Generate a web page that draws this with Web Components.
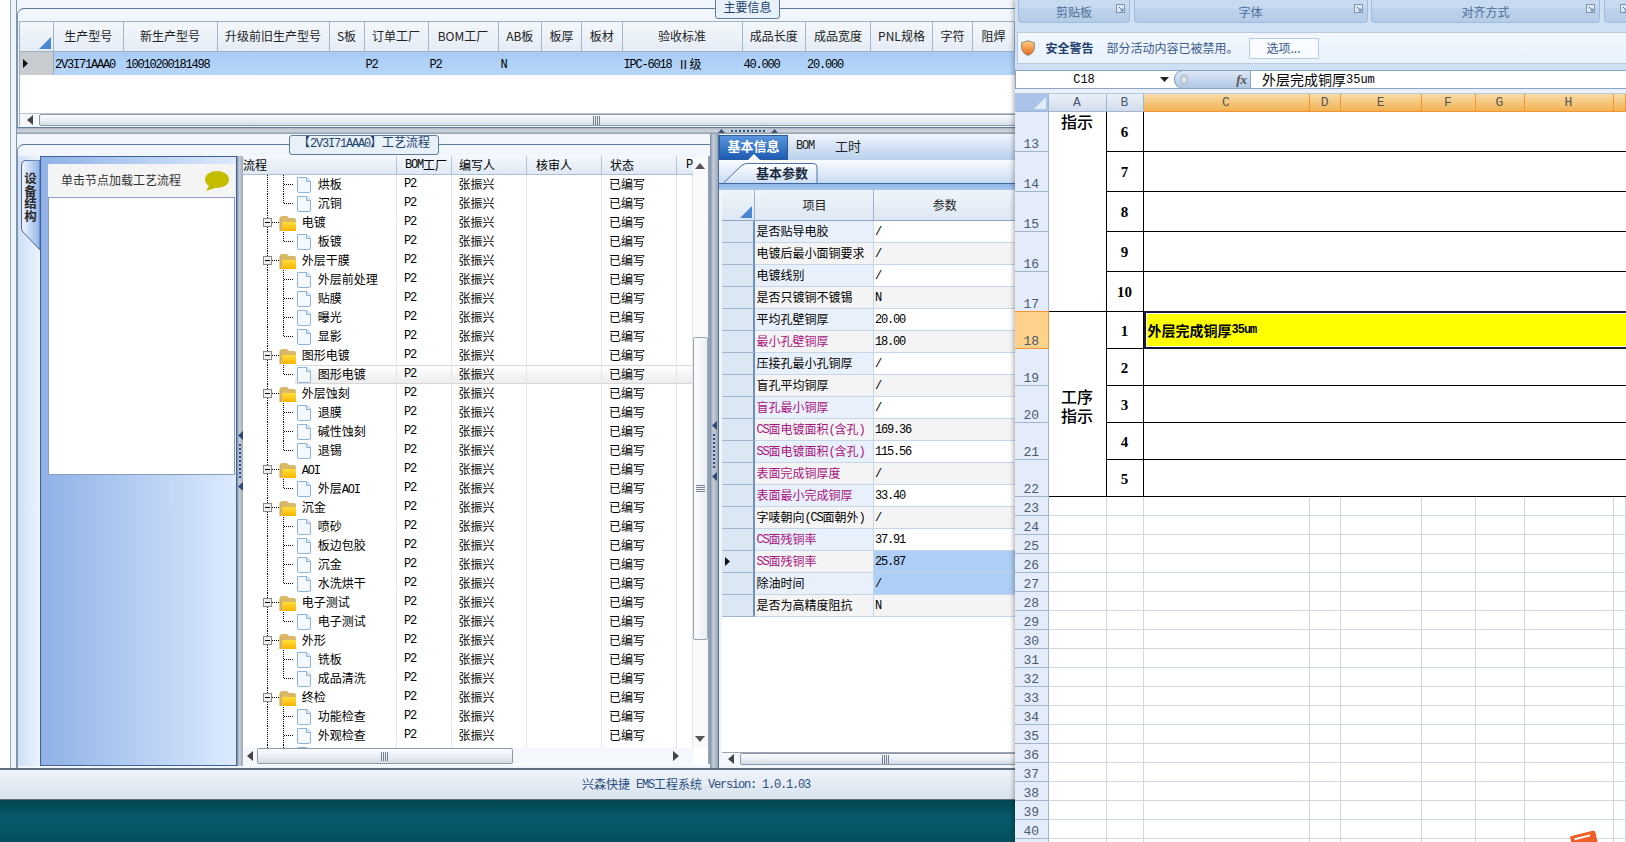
<!DOCTYPE html>
<html lang="zh-CN">
<head>
<meta charset="utf-8">
<title>EMS</title>
<style>
html,body{margin:0;padding:0;background:#04505f}
body{width:1626px;height:842px;overflow:hidden;display:flex;font:12px/1.2 "Noto Sans CJK SC",sans-serif}
</style>
</head>
<body>
<ems-app></ems-app>
<excel-window></excel-window>
<script>
const BASE=`*{box-sizing:border-box}
:host{display:block;font:12px/1.2 "Noto Sans CJK SC",sans-serif;color:#000}
.l{font:12px/1 "Liberation Mono",monospace;letter-spacing:-1.2px;white-space:pre}`;
const T=s=>s.replace(/[\x20-\x7e]+/g,m=>`<span class="l">${m}</span>`);
class Base extends HTMLElement{
  connectedCallback(){
    if(this.shadowRoot)return;
    this.attachShadow({mode:'open'}).innerHTML=`<style>${BASE}${this.constructor.css||''}</style>`+this.html();
  }
  html(){return '<slot></slot>'}
}

/* ---------- horizontal scrollbar ---------- */
class EmsHscroll extends Base{
  static css=`:host{display:flex;align-items:stretch;height:var(--h,13px);background:#f4f7fb;overflow:hidden}
  .a{display:flex;align-items:center;justify-content:center;flex:none}
  .a svg{display:block}
  .t{flex:none;display:flex;align-items:center;justify-content:center;border:1px solid #8c9aaa;border-radius:2px;background:linear-gradient(#fbfcfe,#e6ecf3 60%,#d3dbe5)}
  .g{width:7px;height:9px;background:repeating-linear-gradient(90deg,#76828f 0 1px,transparent 1px 2px)}
  .s{flex:1}`;
  html(){
    const p=this.getAttribute('pre'),t=this.getAttribute('thumb'),e=this.hasAttribute('end');
    return `<div class="a" style="width:${p}px"><svg width="6" height="10"><path d="M6 0V10L0 5Z" fill="#444"/></svg></div>
    <div class="t" style="width:${t}px"><div class="g"></div></div><div class="s"></div>
    ${e?'<div class="a" style="width:27px;padding-right:7px"><svg width="6" height="10"><path d="M0 0V10L6 5Z" fill="#444"/></svg></div>':''}`;
  }
}
customElements.define('ems-hscroll',EmsHscroll);

/* ---------- splitters ---------- */
class EmsSplit extends Base{
  static css=`:host{display:flex;flex:none;align-items:center;justify-content:center}
  :host([dir=v]){flex-direction:column;gap:4px;width:var(--w,6px);background:linear-gradient(90deg,#7d8ea3,#c6ced8 40%,#9ca8b6);}
  :host([dir=h]){height:6px;background:linear-gradient(#aeb8c4,#cfd6de 50%,#8d99a8);position:relative}
  .d{width:2px;height:34px;background:repeating-linear-gradient(#2f4f86 0 2px,transparent 2px 4px)}
  .dh{position:absolute;left:701px;top:1px;width:60px;height:4px;display:flex;align-items:center;gap:6px}
  .dh i{flex:1;height:2px;background:repeating-linear-gradient(90deg,#2f4f86 0 2px,transparent 2px 4px)}`;
  html(){
    if(this.getAttribute('dir')==='h')
      return `<div class="dh"><svg width="7" height="4"><path d="M0 4H7L3.5 0Z" fill="#3c5470"/></svg><i></i><svg width="7" height="4"><path d="M0 4H7L3.5 0Z" fill="#3c5470"/></svg></div>`;
    const a=`<svg width="5" height="9"><path d="M5 0V9L0 4.5Z" fill="#2f4a78"/></svg>`;
    return `${a}<div class="d"></div>${a}`;
  }
}
customElements.define('ems-split',EmsSplit);

/* ---------- titled panel ---------- */
class EmsPanel extends Base{
  static css=`:host{display:block;position:relative;background:#f0f6fb}
  .b{height:100%;border-top:1px solid #5f7c98;border-left:1px solid #8094aa;border-top-left-radius:7px;display:flex;flex-direction:column;min-height:0}
  .t{position:absolute;display:flex;align-items:center;justify-content:center;height:var(--th,20px);left:var(--tl);top:var(--tt);width:var(--tw);padding-bottom:var(--tp,0);background:#e8f0f8;border:1px solid #5f7c98;border-radius:3px;color:#1c4470;white-space:nowrap;z-index:2;line-height:12px}`;
  html(){return `<div class="b"><slot></slot></div><div class="t"><span>${T(this.getAttribute('caption'))}</span></div>`}
}
customElements.define('ems-panel',EmsPanel);

/* ---------- top data grid ---------- */
class EmsMainGrid extends Base{
  static css=`:host{display:flex;flex-direction:column;flex:1;min-height:0;background:#fff;overflow:hidden;border-left:1px solid #9fb0c2;--h:13px}
  .r{display:grid;grid-template-columns:34px 69.5px 94px 112px 35px 64px 70px 43.5px 40px 40.5px 120px 63.5px 65px 62px 40px 42px;flex:none;width:1020px}
  .hd{height:31px;border-top:1px solid #9fb0c2;border-bottom:1px solid #9fb0c2}
  .hd div{display:flex;align-items:center;justify-content:center;background:linear-gradient(#f3f7fb,#e4ecf6);border-right:1px solid #a5b5c8;color:#222;white-space:nowrap}
  .hd div:first-child{position:relative}
  .hd svg{position:absolute;right:2px;bottom:2px}
  .row{height:23px}
  .row div{display:flex;align-items:center;background:linear-gradient(#aacdf5,#b6d5f8);white-space:pre;padding-top:2px}
  .row div:first-child{background:#c8ccd1;border-right:1px solid #9fa8b2;padding-left:3px;padding-top:0}
  .e{flex:1;background:#fff}
  ems-hscroll{border-top:1px solid #b9c4d2}`;
  html(){
    const H=['生产型号','新生产型号','升级前旧生产型号','S板','订单工厂','BOM工厂','AB板','板厚','板材','验收标准','成品长度','成品宽度','PNL规格','字符','阻焊'];
    const R=['2V3I71AAA0','10010200181498','','','P2','P2','N','','','IPC-6018 Ⅱ级','40.000','20.000','','',''];
    return `<div class="r hd"><div><svg width="12" height="12"><path d="M12 0V12H0Z" fill="#4a86d4"/></svg></div>${H.map(h=>`<div>${h}</div>`).join('')}</div>
    <div class="r row"><div><svg width="5" height="9"><path d="M0 0V9L5 4.5Z" fill="#111"/></svg></div>${R.map((h,i)=>`<div style="padding-left:${[1,2,1,1,1,1,2,1,1,1,1,1,1,1,1][i]}px">${T(h)}</div>`).join('')}</div>
    <div class="e"></div>
    <ems-hscroll pre="19" thumb="1114"></ems-hscroll>`;
  }
}
customElements.define('ems-main-grid',EmsMainGrid);

/* ---------- left navigator ---------- */
class EmsNav extends Base{
  static css=`:host{display:flex;flex:none;width:219px;height:610px}
  .strip{width:22px;flex:none;background:linear-gradient(90deg,#cfe0f8,#edf4fd);padding:4px 0 0 3px}
  .tab{position:relative;width:19px;height:90px}
  .tab svg{position:absolute;left:0;top:0}
  .tab b{position:absolute;left:2px;top:12px;height:52px;white-space:nowrap;writing-mode:vertical-rl;font-size:12.5px;line-height:15px;letter-spacing:0;color:#2a2a2a}
  .m{flex:1;border:1px solid #3f6298;background:linear-gradient(90deg,#8fb1e6,#dceafd);padding:7px 1px 0 7px}
  .w{height:311px;background:#fff;border:solid #8a9cc0;border-width:0 1px 1px 1px}
  .h{height:34px;background:#f4f4f4;border-bottom:1px solid #8a9cc0;display:flex;align-items:center;padding:0 6px 0 13px;justify-content:space-between;color:#333;margin:0 -1px}`;
  html(){return `<div class="strip"><div class="tab">
    <svg width="19" height="90"><defs><linearGradient id="g" x1="0" x2="1" y1="0" y2="0"><stop offset="0" stop-color="#f4f8fe"/><stop offset="1" stop-color="#8fb1e6"/></linearGradient></defs><path d="M19 90 L2 72 Q.5 70 .5 68 V5 Q.5 1 4 .5 L19 0Z" fill="url(#g)" stroke="#4a6a9c"/></svg>
    <b>设备结构</b></div></div>
    <div class="m"><div class="w"><div class="h"><span>单击节点加载工艺流程</span>
    <svg width="24" height="20"><ellipse cx="12" cy="8.5" rx="12" ry="8.5" fill="#c4bc00"/><path d="M5 13 L1 20 L13 16Z" fill="#c4bc00"/></svg></div></div></div>`}
}
customElements.define('ems-nav',EmsNav);

/* ---------- process tree ---------- */
const DOT='stroke="#000" stroke-dasharray="1 1" shape-rendering="crispEdges"';
const DOC=`<path d="M54.5 2.5H64L67.5 6V16Q67.5 17.5 66 17.5H56Q54.5 17.5 54.5 16Z" fill="#f4f9ff" stroke="#8db4dd"/><path d="M63.5 2.5V6.5H67.5" fill="#d8e8f8" stroke="#8db4dd"/>`;
const FOLD=`<path d="M37 5Q37 3 39 3H44L46 5H51Q53 5 53 7V18H37Z" fill="#d9b868"/><path d="M39.5 9H53V18H39.5Z" fill="url(#y)"/><path d="M37 5V18" stroke="#c9a24c"/>`;
const Y=`<defs><linearGradient id="y" x1="0" x2="0" y1="0" y2="1"><stop offset="0" stop-color="#ffdf3a"/><stop offset="1" stop-color="#ffb400"/></linearGradient></defs>`;
class EmsTree extends Base{
  static css=`:host{display:grid;grid-template-columns:1fr 15.3px 2px;grid-template-rows:592px 16px;flex:1;min-width:0;height:609px;background:#fff}
  .tb{overflow:hidden;min-width:0}
  .r{display:grid;grid-template-columns:154px 55px 75px 75px 75px 15.7px;height:19px}
  .hd{height:18.5px;background:linear-gradient(#f5f8fc,#dfe9f5);border-bottom:1px solid #aebfd2}
  .hd div{border-right:1px solid #b4c4d6;display:flex;align-items:center;white-space:pre;overflow:hidden}
  .r.b div{border-right:1px solid #e6e6e6;display:flex;align-items:center;white-space:pre;overflow:hidden}
  .r.b svg{flex:none;display:block}
  .r.sel{background:
    linear-gradient(#d8d8d8,#d8d8d8) 52px 0/100% 1px no-repeat,
    linear-gradient(#d8d8d8,#d8d8d8) 52px 100%/100% 1px no-repeat,
    linear-gradient(#fff,#ececec) 52px 0/100% 100% no-repeat}
  .vs{grid-column:2;grid-row:1;background:#f8f9fb;display:flex;flex-direction:column;align-items:center}
  .vs svg{display:block;flex:none}
  .up{height:20px;display:flex;align-items:center;flex:none}
  .sp{height:161px;flex:none}
  .th{width:100%;height:303px;flex:none;background:linear-gradient(90deg,#fbfcfe,#e9eef4);border:1px solid #9aa6b4;border-radius:2px;display:flex;align-items:center;justify-content:center}
  .gr{width:9px;height:7px;background:repeating-linear-gradient(#7a8592 0 1px,transparent 1px 2px)}
  .f{flex:1}
  .edge{grid-column:3;grid-row:1/3;background:#8fa2b6}
  .hs{grid-column:1;grid-row:2;--h:16px}
  .cr{grid-column:2;grid-row:2;background:#fff}`;
  html(){
    const rows=[['d','烘板'],['dl','沉铜'],['f','电镀'],['dl','板镀'],['f','外层干膜'],['d','外层前处理'],['d','贴膜'],['d','曝光'],['dl','显影'],['f','图形电镀'],['dls','图形电镀'],['f','外层蚀刻'],['d','退膜'],['d','碱性蚀刻'],['dl','退锡'],['f','AOI'],['dl','外层AOI'],['f','沉金'],['d','喷砂'],['d','板边包胶'],['d','沉金'],['dl','水洗烘干'],['f','电子测试'],['dl','电子测试'],['f','外形'],['d','铣板'],['dl','成品清洗'],['f','终检'],['d','功能检查'],['d','外观检查'],['d','']];
    const one=([k,t],i)=>{
      const main=`<path d="M24.5 0V19" ${DOT}/>`;
      let s;
      if(k==='f'){
        s=`<svg width="58.7" height="19">${Y}${main}<rect x="20.5" y="5.5" width="8" height="8" fill="#eee" stroke="#8a8a8a"/><path d="M22 9.5H27" stroke="#000" shape-rendering="crispEdges"/><path d="M29 9.5H36" ${DOT}/>${FOLD}</svg>`;
      }else{
        const end=k.includes('l')?9.5:19;
        s=`<svg width="74.7" height="19">${main}<path d="M40.5 0V${end}" ${DOT}/><path d="M41 9.5H51" ${DOT}/>${DOC}</svg>`;
      }
      const partial=!t;
      return `<div class="r b${k.includes('s')?' sel':''}"><div>${s}<span>${T(t)}</span></div><div style="padding-left:7px">${partial?'':T('P2')}</div><div style="padding-left:6.5px">${partial?'':'张振兴'}</div><div></div><div style="padding-left:7px">${partial?'':'已编写'}</div><div></div></div>`;
    };
    return `<div class="tb"><div class="r hd"><div>流程</div><div style="padding-left:8px">${T('BOM')}工厂</div><div style="padding-left:7px">编写人</div><div style="padding-left:9px">核审人</div><div style="padding-left:8px">状态</div><div style="padding-left:9px;border:0">${T('P')}</div></div>${rows.map(one).join('')}</div>
    <div class="vs"><div class="up"><svg width="10" height="6"><path d="M0 6H10L5 0Z" fill="#555"/></svg></div><div class="sp"></div><div class="th"><div class="gr"></div></div><div class="f"></div><div class="up" style="height:18px"><svg width="10" height="6"><path d="M0 0H10L5 6Z" fill="#555"/></svg></div></div>
    <div class="edge"></div>
    <ems-hscroll class="hs" pre="13.7" thumb="256.5" end></ems-hscroll><div class="cr"></div>`;
  }
}
customElements.define('ems-tree',EmsTree);

/* ---------- properties ---------- */
class EmsProps extends Base{
  static css=`:host{display:flex;flex-direction:column;flex:1;min-width:0;height:634px;background:#f0f6fb;padding-top:1px;overflow:hidden;border-left:1px solid #4f6f9c;--h:13px}
  .tabs{height:25px;flex:none;display:flex;align-items:stretch;background:linear-gradient(#eef4fc,#b9d0eb)}
  .on{width:69px;position:relative;background:linear-gradient(#5a96dc,#1c5bb2);color:#fff;font-weight:700;font-size:13px;display:flex;align-items:center;justify-content:center;border:1px solid #2a5c9e;padding-bottom:3px}
  .on svg{position:absolute;left:28px;bottom:-1px}
  .t2{display:flex;align-items:center;padding:0 0 3px 8px;width:39px;color:#222}
  .t3{display:flex;align-items:center;padding:0 0 3px 8px;font-size:13px;color:#222}
  .sub{height:24px;flex:none;padding:3px 0 0 4px;background:linear-gradient(#fafcff,#c8dbf2);border-bottom:1px solid #3d6aa5}
  .st{position:relative;width:96px;height:20px;display:flex;align-items:center;justify-content:flex-end;padding-right:11px;font-weight:700;font-size:13px;color:#1a2a40}
  .st svg{position:absolute;left:0;top:0}
  .st span{position:relative}
  .strip{height:6px;flex:none;background:linear-gradient(#8fb6e6,#a9c8ee)}
  .body{flex:1;min-height:0;background:#fff;margin-left:3px;display:flex;flex-direction:column;overflow:hidden}
  .rows{flex:1;min-height:0}
  .r{display:grid;grid-template-columns:33px 118.5px 142px;height:22px}
  .r div{display:flex;align-items:center;border-bottom:1px solid #c6d6e9;white-space:pre;padding-left:1.5px}
  .r div:first-child{background:#dce7f4;border-right:2px solid #6f8fbd;border-bottom-color:#9fb5d2;padding-left:3px}
  .r div:nth-child(2){border-right:1px solid #c6d6e9}
  .hd{height:31px}
  .hd div{justify-content:center;background:linear-gradient(#f0f5fb,#dde7f3)!important;border-bottom:1px solid #8fa6c4!important;border-right:1px solid #9fb2ca!important;position:relative;color:#222}
  .hd svg{position:absolute;right:2px;bottom:2px}
  .a div:nth-child(2){background:#e8f0fb}.a div:nth-child(3){background:#fff}
  .b div:nth-child(2),.b div:nth-child(3){background:#f4f4f4}
  .p div:nth-child(2){color:#a8127e}
  .s div:nth-child(3){background:#aecff5!important}
  .foot{height:3px;flex:none;background:#f0f6fb}
  ems-hscroll{flex:none;border-top:1px solid #9aa6b4}`;
  html(){
    const D=[['是否贴导电胶','/'],['电镀后最小面铜要求','/'],['电镀线别','/'],['是否只镀铜不镀锡','N'],['平均孔壁铜厚','20.00'],['最小孔壁铜厚','18.00',1],['压接孔最小孔铜厚','/'],['盲孔平均铜厚','/'],['盲孔最小铜厚','/',1],['CS面电镀面积(含孔)','169.36',1],['SS面电镀面积(含孔)','115.56',1],['表面完成铜厚度','/',1],['表面最小完成铜厚','33.40',1],['字唛朝向(CS面朝外)','/'],['CS面残铜率','37.91',1],['SS面残铜率','25.87',1,1,1],['除油时间','/',0,1],['是否为高精度阻抗','N']];
    return `<div class="tabs"><div class="on">基本信息<svg width="12" height="6"><path d="M0 6H12L6 0Z" fill="#fff"/></svg></div><div class="t2">${T('BOM')}</div><div class="t3">工时</div></div>
    <div class="sub"><div class="st"><svg width="96" height="20"><defs><linearGradient id="t" x1="0" x2="0" y1="0" y2="1"><stop offset="0" stop-color="#fff"/><stop offset="1" stop-color="#cfdff3"/></linearGradient></defs><path d="M.5 20 L18 3 Q21 .5 24 .5 H90 Q94 .5 94 4 V20" fill="url(#t)" stroke="#4a74a8"/></svg><span>基本参数</span></div></div>
    <div class="strip"></div>
    <div class="body"><div class="rows"><div class="r hd"><div><svg width="12" height="12"><path d="M12 0V12H0Z" fill="#4a86d4"/></svg></div><div>项目</div><div>参数</div></div>
    ${D.map((d,i)=>`<div class="r ${i%2?'b':'a'}${d[2]?' p':''}${d[3]?' s':''}"><div>${d[4]?'<svg width="5" height="9"><path d="M0 0V9L5 4.5Z" fill="#111"/></svg>':''}</div><div>${T(d[0])}</div><div>${T(d[1])}</div></div>`).join('')}</div>
    <ems-hscroll pre="18" thumb="290"></ems-hscroll><div class="foot"></div></div>`;
  }
}
customElements.define('ems-props',EmsProps);

/* ---------- application ---------- */
class EmsApp extends Base{
  static css=`:host{display:flex;flex-direction:column;width:1015px;height:842px;flex:none;background:#fff;overflow:hidden}
  .main{height:768px;flex:none;display:flex;margin-left:10px;border-left:1px solid #9aa5b1;padding-left:5px;background:#eef4fb}
  .c{flex:1;min-width:0;display:flex;flex-direction:column;border-left:1px solid #8094aa}
  .top{height:128px;flex:none;padding-top:8px;--tl:698px;--tw:65px;--tt:-13px;--th:23.5px;background:#f0f6fb;border-bottom:1px solid #5f7c98;overflow:hidden;position:relative}
  .top ems-panel{height:120px}
  .gw{flex:1;min-height:0;display:flex;flex-direction:column;padding:12px 0 2px 1px;overflow:hidden}
  .low{flex:1;min-height:0;display:flex}
  .lp{width:693px;flex:none;height:634px;padding-top:10px;background:#f0f6fb;--tl:272px;--tw:150px;--tt:-9px;--th:20px;--tp:4px}
  .lr{display:flex;flex:1;min-height:0;padding:11px 0 0 0;align-items:flex-start}
  .st{height:32px;flex:none;border-top:2px solid #5f7080;background:linear-gradient(#eff4fb,#d8e2ec);border-bottom:1px solid #5c6c7c;display:flex;align-items:center;padding-left:582px;color:#2a4f80;white-space:pre}
  .dk{flex:1;background:linear-gradient(#02434f,#065a6b 40%,#04505f)}`;
  html(){return `<div class="main"><div class="c">
    <div class="top"><ems-panel caption="主要信息"><div class="gw"><ems-main-grid></ems-main-grid></div></ems-panel></div>
    <ems-split dir="h"></ems-split>
    <div class="low">
      <div class="lp"><ems-panel caption="【2V3I71AAA0】工艺流程" style="height:624px">
        <div class="lr"><ems-nav></ems-nav><ems-split dir="v" style="height:610px"></ems-split><ems-tree></ems-tree></div>
      </ems-panel></div>
      <ems-split dir="v" style="--w:8px;height:634px"></ems-split>
      <ems-props></ems-props>
    </div>
  </div></div>
  <div class="st">${T('兴森快捷 EMS工程系统 Version: 1.0.1.03')}</div>
  <div class="dk"></div>`}
}
customElements.define('ems-app',EmsApp);

/* ---------- excel ---------- */
class ExcelWindow extends Base{
  static css=`:host{display:block;position:relative;width:611px;height:842px;flex:none;background:#cfe0f5;overflow:hidden;box-shadow:-2px 0 4px rgba(0,0,0,.25);z-index:3}
  .rb{height:32px;display:flex;gap:3.5px;padding:0 0 0 3px}
  .g{height:23px;flex:none;position:relative;display:flex;align-items:center;justify-content:center;color:#4f6f99;background:linear-gradient(#c8daef 0 8px,#bed3ec 8px,#b4cbe7);border:1px solid #a3bcd9;border-top:0;border-radius:0 0 4px 4px;padding-top:3px}
  .g svg{position:absolute;right:4px;top:4px}
  .sec{height:32px;margin-left:2px;background:linear-gradient(#f2f7fe,#e9f1fb);border:1px solid #b7cbe2;border-right:0;display:flex;align-items:center;padding-left:3px}
  .sec svg{flex:none}
  .sec b{margin-left:10.5px;color:#1f3f6f}
  .sec span{margin-left:13px;color:#3a5a8a;width:142px;white-space:nowrap}
  .btn{width:70px;height:21px;border:1px solid #b7cbe2;background:#f8fbff;display:flex;align-items:center;justify-content:center;color:#3a5a8a}
  .fb{height:19px;margin-top:6px;background:#fff;border-top:1px solid #8aa5c4;border-bottom:1px solid #8aa5c4;display:flex;align-items:stretch;border-left:1px solid #8aa5c4}
  .nm{width:144px;flex:none;display:flex;align-items:center;justify-content:center;font:12px "Liberation Mono",monospace;padding-right:8px}
  .arr{width:14px;flex:none;display:flex;align-items:center}
  .pill{width:77px;flex:none;border-radius:9px 0 0 9px;background:linear-gradient(#dde8f6,#b0c7e4);display:flex;align-items:center;justify-content:space-between;padding:0 3px 0 5px;border:1px solid #8aa5c4;border-left-color:#7f9abb;margin:-1px 0}
  .pill em{font:italic 700 13px "Liberation Serif",serif;color:#555}
  .pill u{width:8px;height:11px;border-radius:50%;background:radial-gradient(#f4f6f8,#8f9eb0);display:block}
  .ft{padding-left:11px;display:flex;align-items:center;font-size:14px;white-space:pre}
  .ft .l{font-size:12px;letter-spacing:0}
  .gap{height:5px;background:#eaf1fa;border-bottom:1px solid #b9c9dc}
  .sh{display:grid;background:#fff;grid-template-columns:33.5px 58px 37px 166px 31.5px 80.5px 54px 49px 89px 12.5px;grid-template-rows:18px repeat(5,40px) repeat(5,37px) repeat(19,19px)}
  .ch,.rh{background:#e3ecf8;display:flex;justify-content:center;font:13px/1 "Liberation Mono",monospace;color:#4a5a70}
  .ch{align-items:center;background:linear-gradient(#e9eff7,#d3ddec);border-right:1px solid #9eb6ce;border-bottom:1px solid #9eb6ce}
  .ch.o{background:linear-gradient(#f9dca8,#f1b252);border-right:1px solid #f29536;border-bottom:1px solid #f29536;color:#555}
  .co{position:relative;background:#a9c3ea;border-right:1px solid #9eb6ce;border-bottom:1px solid #9eb6ce}
  .co svg{position:absolute;right:2px;bottom:2px}
  .rh{align-items:flex-end;border-bottom:1px solid #9eb6ce;border-right:1px solid #9eb6ce}
  .rh.o{background:#fdd28b;border-bottom:1px solid #f29536;border-right:1px solid #f29536;border-top:1px solid #f29536;margin-top:-1px}
  .c{border-right:1px solid #d0d7e5;border-bottom:1px solid #d0d7e5}
  .m{display:flex;align-items:center;justify-content:center;border-right:1px solid #000;border-bottom:1px solid #000;min-width:0}
  .m.n{font:700 15px "Liberation Serif",serif;padding-top:2px}
  .cj{font-size:16px;line-height:19px;font-weight:500;text-align:center;color:#000}
  .w{border-bottom:1px solid #000}
  .y{background:#ff0;border:2px solid #1a1a40;box-shadow:inset 0 0 0 1px #fff;margin:-1px -4px 0 0;display:flex;align-items:center;padding-left:2px;font-weight:700;font-size:14px;white-space:pre;z-index:1}
  .y .l{font:700 12px "Liberation Mono",monospace;letter-spacing:-1px}
  .logo{position:absolute;left:556px;top:833px;transform:rotate(-14deg)}`;
  html(){
    const cols='ABCDEFGH'.split('');
    let h=`<div class="co"><svg width="12" height="12"><path d="M12 0V12H0Z" fill="#e4ecf7"/></svg></div>`;
    cols.forEach((c,i)=>{h+=`<div class="ch${i>1?' o':''}">${c}</div>`});
    h+=`<div class="ch o"></div>`;
    for(let r=13;r<=41;r++){
      const row=r-11;
      h+=`<div class="rh${r===18?' o':''}" style="grid-row:${row};grid-column:1">${r<41?r:''}</div>`;
      if(r>22){for(let c=2;c<=11;c++)h+=`<div class="c" style="grid-row:${row};grid-column:${c}"></div>`;continue;}
      const n=r<18?r-7:r-17;
      h+=`<div class="m n" style="grid-row:${row};grid-column:3">${n}</div>`;
      if(r===18)h+=`<div class="y" style="grid-row:${row};grid-column:4/12">${T('外层完成铜厚35um')}</div>`;
      else h+=`<div class="w" style="grid-row:${row};grid-column:4/12"></div>`;
    }
    h+=`<div class="m cj" style="grid-row:2/7;grid-column:2;align-items:flex-start">指示</div>`;
    h+=`<div class="m cj" style="grid-row:7/12;grid-column:2;padding-top:3px"><span>工序<br>指示</span></div>`;
    const L=`<svg width="9" height="9"><rect x=".5" y=".5" width="8" height="8" fill="#dfe9f5" stroke="#7f97b5"/><path d="M3 3L7 7M7 4.5V7H4.5" fill="none" stroke="#56708f"/></svg>`;
    return `<div class="rb"><div class="g" style="width:112px">剪贴板${L}</div><div class="g" style="width:234px">字体${L}</div><div class="g" style="width:229px">对齐方式${L}</div><div class="g" style="width:30px">${L}</div></div>
    <div class="sec"><svg width="14" height="16"><defs><linearGradient id="sh" x1="0" x2="0" y1="0" y2="1"><stop offset="0" stop-color="#ffd27a"/><stop offset="1" stop-color="#e8641a"/></linearGradient></defs><path d="M7 .7 L13.3 2.8 V8 Q13.3 13 7 15.4 Q.7 13 .7 8 V2.8Z" fill="url(#sh)" stroke="#8a8a8a"/></svg><b>安全警告</b><span>部分活动内容已被禁用。</span><div class="btn">选项...</div></div>
    <div class="fb"><div class="nm">C18</div><div class="arr"><svg width="9" height="5"><path d="M0 0H9L4.5 5Z" fill="#222"/></svg></div><div class="pill"><u></u><em>fx</em></div><div class="ft">${T('外层完成铜厚35um')}</div></div>
    <div class="gap"></div>
    <div class="sh">${h}</div>
    <svg class="logo" width="26" height="14"><rect width="26" height="14" rx="2" fill="#ef5f27"/><path d="M4 4H20" stroke="#fff" stroke-width="2"/></svg>`;
  }
}
customElements.define('excel-window',ExcelWindow);
</script>
</body>
</html>
